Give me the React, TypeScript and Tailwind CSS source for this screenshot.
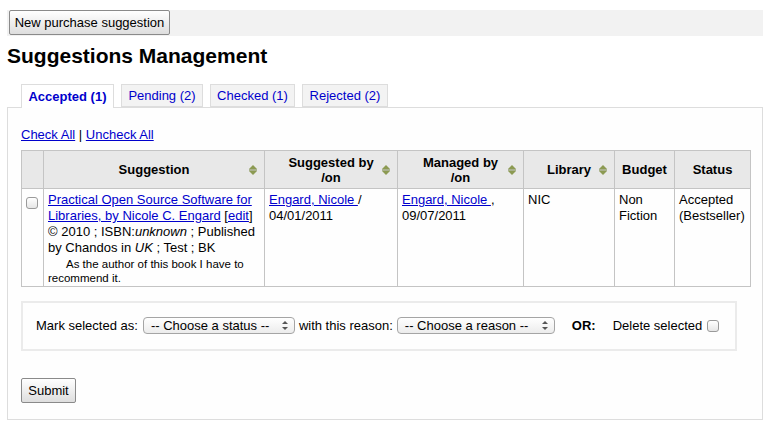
import React from "react";

function SortIcon() {
  return (
    <svg width="8" height="10" viewBox="0 0 8 10" className="absolute right-[7px] top-1/2 -translate-y-1/2">
      <polygon points="4,0 8,4 0,4" fill="#8c9a52" />
      <rect x="0" y="4.5" width="8" height="1" fill="#6b7a33" />
      <polygon points="0,6 8,6 4,10" fill="#8c9a52" />
    </svg>
  );
}

function FakeCheckbox() {
  return (
    <span className="inline-block w-[12px] h-[12px] rounded-[3px] border border-[#9a9a9a] bg-gradient-to-b from-white to-[#e6e6e6] align-middle" />
  );
}

function FakeSelect({ label, width }: { label: string; width: string }) {
  return (
    <span
      className={`inline-flex items-center justify-between h-[17px] rounded-[4px] border border-[#a5a5a5] bg-gradient-to-b from-white to-[#ececec] pl-[7px] pr-[6px] text-[13px] leading-none text-black ${width}`}
    >
      <span>{label}</span>
      <svg width="6" height="9" viewBox="0 0 6 9">
        <polygon points="3,0 6,3 0,3" fill="#555" />
        <polygon points="0,6 6,6 3,9" fill="#555" />
      </svg>
    </span>
  );
}

export default function App() {
  const th = "relative border border-[#c4c4c4] bg-[#e8e8e8] font-bold text-center align-middle px-[4px] leading-[15px]";
  const td = "border border-[#c4c4c4] align-top px-[4px] pt-[3px] leading-[16px]";
  return (
    <div className="w-[770px] h-[432px] bg-white overflow-hidden font-['Liberation_Sans',Arial,sans-serif] text-[13px] text-black">
      <div className="pt-[10px] px-[7px]">
        <div className="bg-[#f2f2f2] h-[26px] pl-[2px] flex items-start">
          <button className="h-[25px] w-[161px] border border-[#8a8a8a] rounded-[2px] bg-gradient-to-b from-white to-[#dedede] text-[13px] text-black">
            New purchase suggestion
          </button>
        </div>
        <h1 className="mt-[7px] text-[21px] leading-[25px] font-bold">Suggestions Management</h1>
        <div className="mt-[16px] flex pl-[14px] gap-[7px] relative z-10">
          <div className="h-[24px] w-[93px] justify-center border border-[#dddddd] border-b-0 bg-white flex items-center font-bold text-[#0000cc]">
            Accepted (1)
          </div>
          <div className="h-[23px] w-[82px] justify-center border border-[#dddddd] bg-[#f3f3f3] flex items-center text-[#0000cc]">
            Pending (2)
          </div>
          <div className="h-[23px] w-[85px] justify-center border border-[#dddddd] bg-[#f3f3f3] flex items-center text-[#0000cc]">
            Checked (1)
          </div>
          <div className="h-[23px] w-[86px] justify-center border border-[#dddddd] bg-[#f3f3f3] flex items-center text-[#0000cc]">
            Rejected (2)
          </div>
        </div>
        <div className="-mt-[1px] h-[313px] border border-[#dddddd] bg-[#fefefe] pl-[13px] pt-[19px]">
          <div className="leading-[16px]">
            <a className="text-[#0000cc] underline">Check All</a> | <a className="text-[#0000cc] underline">Uncheck All</a>
          </div>
          <table className="mt-[7px] w-[729px] table-fixed border-collapse">
            <colgroup>
              <col className="w-[22px]" />
              <col className="w-[221px]" />
              <col className="w-[133px]" />
              <col className="w-[126px]" />
              <col className="w-[91px]" />
              <col className="w-[60px]" />
              <col className="w-[76px]" />
            </colgroup>
            <thead>
              <tr className="h-[38px]">
                <th className={th}></th>
                <th className={th}>
                  Suggestion
                  <SortIcon />
                </th>
                <th className={th}>
                  Suggested by
                  <br />
                  /on
                  <SortIcon />
                </th>
                <th className={th}>
                  Managed by
                  <br />
                  /on
                  <SortIcon />
                </th>
                <th className={th}>
                  Library
                  <SortIcon />
                </th>
                <th className={th}>Budget</th>
                <th className={th}>Status</th>
              </tr>
            </thead>
            <tbody>
              <tr className="h-[98px]">
                <td className={`${td} !pt-[5px]`}>
                  <FakeCheckbox />
                </td>
                <td className={td}>
                  <a className="text-[#0000cc] underline">Practical Open Source Software for Libraries, by Nicole C. Engard</a>{" "}
                  [<a className="text-[#0000cc] underline">edit</a>]
                  <br />© 2010 ; ISBN:<span className="italic">unknown</span> ; Published by Chandos in{" "}
                  <span className="italic">UK</span> ; Test ; BK
                  <div className="mt-[1px] text-[11.5px] leading-[14px] indent-[18px] pr-[6px]">
                    As the author of this book I have to recommend it.
                  </div>
                </td>
                <td className={td}>
                  <a className="text-[#0000cc] underline">Engard, Nicole </a> /<br />
                  04/01/2011
                </td>
                <td className={td}>
                  <a className="text-[#0000cc] underline">Engard, Nicole </a>,<br />
                  09/07/2011
                </td>
                <td className={td}>NIC</td>
                <td className={td}>Non Fiction</td>
                <td className={td}>Accepted (Bestseller)</td>
              </tr>
            </tbody>
          </table>
          <div className="mt-[14px] w-[716px] h-[50px] border-2 border-[#ebebeb] flex items-center pl-[13px]">
            <span>Mark selected as:</span>
            <span className="ml-[5px]">
              <FakeSelect label="-- Choose a status --" width="w-[152px]" />
            </span>
            <span className="ml-[4px]">with this reason:</span>
            <span className="ml-[4px]">
              <FakeSelect label="-- Choose a reason --" width="w-[158px]" />
            </span>
            <span className="ml-[17px] font-bold">OR:</span>
            <span className="ml-[17px]">Delete selected</span>
            <span className="ml-[5px] flex items-center">
              <FakeCheckbox />
            </span>
          </div>
          <button className="mt-[27px] h-[25px] w-[55px] border border-[#8a8a8a] rounded-[2px] bg-gradient-to-b from-white to-[#dedede] text-[13px] text-black">
            Submit
          </button>
        </div>
      </div>
    </div>
  );
}
